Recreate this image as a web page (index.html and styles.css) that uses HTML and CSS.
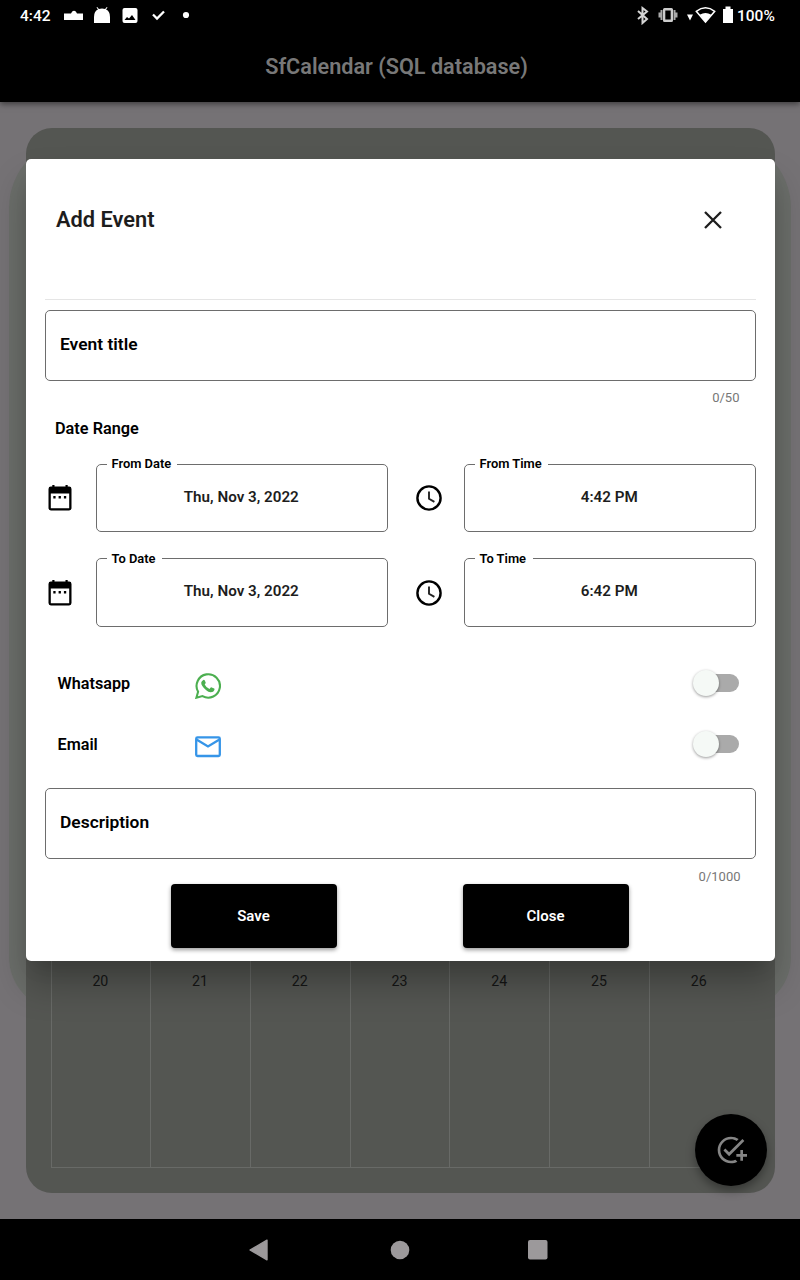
FILE: index.html
```html
<!DOCTYPE html>
<html lang="en">
<head>
<meta charset="utf-8">
<title>SfCalendar (SQL database)</title>
<link rel="stylesheet" href="styles.css">
</head>
<body>
<div class="screen">
  <header class="topbar">
    <div class="status">
      <span class="clock">4:42</span>
      <svg class="status-left" width="130" height="20" viewBox="0 0 130 20" fill="#fff">
        <path d="M0 7.500h7l1.200-2q1.800-1.400 3.600 0L13 7.500h6V14H0z"/>
        <path d="M30 17v-6q0-6 4-7.500l-1.500-2 .7-.5 1.700 2q3.100-1 6.200 0l1.700-2 .7.500-1.500 2q4 1.500 4 7.500v6z"/>
        <path fill-rule="evenodd" d="M60.500 2h11q2 0 2 2v11q0 2-2 2h-11q-2 0-2-2V4q0-2 2-2zm0 12h11l-3.500-5-3 3.500-2-1.500z"/>
        <path d="M89 8.500l4 4 7-7" fill="none" stroke="#fff" stroke-width="2.300"/>
        <circle cx="122" cy="9" r="3.100"/>
      </svg>
      <svg class="status-right" width="100" height="20" viewBox="0 0 100 20" fill="#fff">
        <path d="M3 6l9 8-4.500 4V3L12 6.500 3 14" fill="none" stroke="#d5d5d5" stroke-width="2"/>
        <path d="M29.500 3h7q1.500 0 1.500 1.500v11q0 1.500-1.500 1.500h-7q-1.500 0-1.500-1.500v-11Q28 3 29.500 3zm.8 2.500v9h5.400v-9z" fill="#ccc" fill-rule="evenodd"/>
        <path d="M26.500 5v10M24.500 7.500v5M39.500 5v10M41.500 7.500v5" stroke="#aaa" stroke-width="2"/>
        <path d="M52 9.500h6l-3 6z"/>
        <path d="M61.300 6.300Q70.500-.8 79.700 6.300L70.500 17z" fill="none" stroke="#fff" stroke-width="1.500"/>
        <path d="M64.700 9.800q5.800-3.500 11.600 0L70.500 17z"/>
        <path d="M88 4h2.500V1.500h5V4H98v14H88z"/>
      </svg>
      <span class="percent">100%</span>
    </div>
    <h1 class="app-title">SfCalendar (SQL database)</h1>
  </header>

  <main class="backdrop">
    <div class="halo"></div>
    <section class="calendar">
      <div class="week">
        <span class="day">20</span><span class="day">21</span><span class="day">22</span><span class="day">23</span><span class="day">24</span><span class="day">25</span><span class="day">26</span>
      </div>
    </section>
    <div class="fab">
      <svg width="32" height="32" viewBox="0 0 24 24" fill="#858585"><path d="M22 5.180 10.590 16.600l-4.240-4.240 1.410-1.410 2.830 2.830 10-10L22 5.180zM12 20c-4.410 0-8-3.590-8-8s3.590-8 8-8c1.570 0 3.040.46 4.280 1.250l1.450-1.450A10.020 10.020 0 0 0 12 2C6.480 2 2 6.480 2 12s4.480 10 10 10c1.730 0 3.360-.44 4.780-1.220l-1.500-1.500c-1 .46-2.110.72-3.280.72zm7-5h-3v2h3v3h2v-3h3v-2h-3v-3h-2v3z"/></svg>
    </div>
  </main>

  <section class="dialog">
    <div class="dialog-head">
      <h2>Add Event</h2>
      <svg width="18" height="18" viewBox="0 0 18 18"><path d="M1 1l16 16M17 1L1 17" stroke="#1d1d1d" stroke-width="2.300"/></svg>
    </div>
    <div class="textbox">Event title</div>
    <div class="counter">0/50</div>
    <h3 class="range-title">Date Range</h3>
    <div class="ranges">
      <svg class="ico" viewBox="0 0 30 30"><use href="#calendar"/></svg>
      <fieldset class="pick"><legend>From Date</legend><span>Thu, Nov 3, 2022</span></fieldset>
      <svg class="ico clock-ico" viewBox="0 0 30 30"><use href="#time"/></svg>
      <fieldset class="pick"><legend>From Time</legend><span>4:42 PM</span></fieldset>
      <svg class="ico" viewBox="0 0 30 30"><use href="#calendar"/></svg>
      <fieldset class="pick"><legend class="short">To Date</legend><span>Thu, Nov 3, 2022</span></fieldset>
      <svg class="ico clock-ico" viewBox="0 0 30 30"><use href="#time"/></svg>
      <fieldset class="pick"><legend class="short">To Time</legend><span>6:42 PM</span></fieldset>
    </div>
    <div class="option">
      <span class="option-name">Whatsapp</span>
      <svg class="channel" viewBox="0 0 26 26">
        <path d="M1.400 24.700l1.700-6A11.700 11.700 0 1 1 7.500 23.100z" fill="none" stroke="#4caf50" stroke-width="2.100"/>
        <path d="M8.300 6.900q.9-.5 1.500.5l.9 2.200q.3.700-1 1.900 1.500 3.200 4.800 4.500l1.200-1.400q.5-.5 1.100-.2l2.400 1.200q.5.300.2 1.500-.8 2.300-3.800 2.200Q11 18.600 7.300 13 4.700 9 8.300 6.900z" fill="#4caf50"/>
      </svg>
      <span class="switch"></span>
    </div>
    <div class="option">
      <span class="option-name">Email</span>
      <svg class="channel" viewBox="0 0 26 26" fill="none" stroke="#3695e8" stroke-width="2.300"><rect x="1.200" y="3.400" width="23.600" height="18.600" rx="1.300"/><path d="M1.500 5.400L13 12.500l11.500-7.100"/></svg>
      <span class="switch"></span>
    </div>
    <div class="textbox description">Description</div>
    <div class="counter last">0/1000</div>
    <div class="actions"><button>Save</button><button>Close</button></div>
  </section>

  <nav class="navbar">
    <svg width="20" height="22" viewBox="0 0 20 22"><path d="M1 11L18 1.200V20.800z" fill="#9c999b" stroke="#9c999b" stroke-width="1.400" stroke-linejoin="round"/></svg>
    <svg width="20" height="20" viewBox="0 0 20 20"><circle cx="10" cy="10" r="9.300" fill="#9c999b"/></svg>
    <svg width="20" height="20" viewBox="0 0 20 20"><rect width="19.500" height="19.500" rx="2" fill="#9c999b"/></svg>
  </nav>
</div>

<svg width="0" height="0" class="symbols">
  <symbol id="calendar" viewBox="0 0 30 30">
    <path fill-rule="evenodd" d="M5.900 3.500h18.200Q26.500 3.500 26.500 5.900V25.100Q26.500 27.500 24.100 27.500H5.900Q3.500 27.500 3.500 25.100V5.900Q3.500 3.500 5.900 3.500zM5.800 10.500v14.700h18.400V10.500z"/>
    <path d="M7.300 2h2.200v2.500H7.300zM20.500 2h2.200v2.500h-2.200zM8.300 13.100h2.300v2.300H8.300zM13.600 13.100h2.300v2.300h-2.300zM18.900 13.100h2.300v2.300h-2.300z"/>
  </symbol>
  <symbol id="time" viewBox="0 0 30 30">
    <circle cx="15" cy="15" r="11.600" fill="none" stroke="#000" stroke-width="2.400"/>
    <path d="M15 8.500V15.700L20.400 18.900" fill="none" stroke="#222" stroke-width="1.900"/>
  </symbol>
</svg>
</body>
</html>
```

FILE: styles.css
```css
* { box-sizing: border-box; }
body { margin: 0; font-family: Roboto, "Liberation Sans", sans-serif; font-weight: 600; }
h1, h2, h3 { margin: 0; font-weight: 600; }
svg { display: block; flex: none; }
.symbols { position: absolute; }

.screen { position: relative; width: 800px; height: 1280px; display: flex; flex-direction: column; overflow: hidden; background: #000; }

.topbar { height: 102px; flex: none; background: #000; z-index: 1; box-shadow: 0 2px 6px rgba(0,0,0,.5); }
.status { height: 32px; display: flex; align-items: center; padding: 0 24px 0 20px; color: #fff; font-size: 15.5px; line-height: 32px; font-weight: 500; }
.clock { width: 44px; }
.status-left { margin-top: -1px; }
.status-right { margin-left: auto; margin-top: -2px; }
.percent { width: 39px; font-size: 15.5px; margin-left: 2px; }
.app-title { width: 793px; text-align: center; color: #787878; font-size: 21.65px; line-height: 69px; }

.backdrop { position: relative; height: 1117px; flex: none; background: #757275; padding: 26px 25.5px; }
.halo { position: absolute; left: 9px; top: 36px; width: 782px; height: 873px; border-radius: 70px 70px 54px 54px; background: #6b6e6a; }
.calendar { position: relative; height: 1065px; border-radius: 26px; background: #545652; padding: 80px 26px 25.500px 25px; display: flex; }
.week { flex: 1; display: grid; grid-template-columns: repeat(7, 1fr); border-bottom: 1px solid #686a67; }
.day { border-left: 1px solid #686a67; padding-top: 762px; padding-right: 1px; text-align: center; font-size: 14.200px; line-height: 22px; font-weight: 400; color: #151515; }
.fab { position: absolute; left: 695.3px; top: 1012px; width: 72px; height: 72px; border-radius: 50%; background: #000; display: grid; place-items: center; box-shadow: 0 5px 10px rgba(0,0,0,.35); }

.dialog { position: absolute; z-index: 2; left: 25.5px; top: 158.5px; width: 749px; height: 802px; background: #fff; border-radius: 5px; padding: 0 18.500px 0 19.500px; box-shadow: 0 14px 19px -9px rgba(0,0,0,.12), 0 24px 36px 0 rgba(0,0,0,.24); }
.dialog-head { height: 141px; border-bottom: 1px solid #e5e5e5; padding: 0 34px 18px 11px; display: flex; align-items: center; justify-content: space-between; color: #1d1d1d; }
.dialog-head h2 { font-size: 21.8px; line-height: 26px; }
.textbox { margin-top: 10px; height: 71.5px; border: 1px solid #6d6d6d; border-radius: 5px; padding-left: 14px; font-size: 17.4px; line-height: 67px; color: #000; }
.counter { height: 18px; margin-top: 8px; padding-right: 16.5px; text-align: right; font-size: 13px; line-height: 18px; font-weight: 400; color: #777; }
.range-title { font-size: 16.3px; line-height: 20px; margin: 12px 0 0 10px; }
.ranges { margin-top: 17px; display: grid; grid-template-columns: 51px 292px 76px 292px; grid-auto-rows: 94.5px; }
.ico { width: 30px; height: 30px; margin: 27px 0 0; }
.clock-ico { justify-self: center; margin-left: 5.5px; }
.pick { margin: 0; min-width: 0; height: 76px; border: 1px solid #6d6d6d; border-radius: 5px; padding: 0 11px 0 9.500px; text-align: center; color: #1d1d1d; font-size: 15.2px; }
.pick legend { padding: 0 6px 0 5px; font-size: 12.9px; line-height: 16px; color: #000; text-align: left; }
.pick legend.short { padding-right: 6.5px; }
.pick span { display: block; line-height: 20px; margin-top: 14.5px; }
.option { height: 61px; display: grid; grid-template-columns: 137.5px 26px 1fr; align-items: center; padding: 0 17px 0 12.500px; font-size: 16.2px; }
.ranges + .option { margin-top: 8px; }
.channel { width: 26px; height: 26px; margin-top: 4px; }
.switch { justify-self: end; position: relative; top: -.6px; width: 44px; height: 18px; border-radius: 9px; background: #aaa; }
.switch::before { content: ""; position: absolute; left: -2px; top: -4px; width: 26px; height: 26px; border-radius: 50%; background: #f5f9f6; box-shadow: 0 1px 3px rgba(0,0,0,.4); }
.description { margin-top: 12.6px; height: 71px; }
.counter.last { height: 16px; margin-top: 9px; padding-right: 15.5px; }
.actions { display: flex; gap: 126px; padding-left: 126px; }
.actions button { width: 166px; height: 64px; border: 0; border-radius: 4px; padding: 0 7px 0 6px; background: #000; color: #fff; font: 600 15px Roboto, sans-serif; box-shadow: 0 2px 4px rgba(0,0,0,.4); }

.navbar { flex: 1; display: grid; grid-template-columns: 20px 121px 20px 117.5px 20px; justify-content: center; align-items: center; padding-right: 3.5px; }
.navbar svg:nth-child(2) { grid-column: 3; }
.navbar svg:nth-child(3) { grid-column: 5; }
```
